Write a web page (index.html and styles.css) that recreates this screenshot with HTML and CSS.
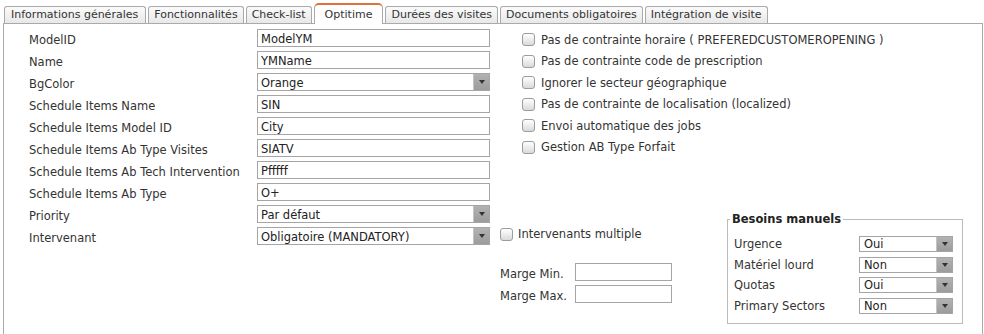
FILE: index.html
```html
<!DOCTYPE html>
<html lang="fr">
<head>
    <meta charset="UTF-8">
    <title>Optitime</title>
    <link rel="stylesheet" href="styles.css">
</head>
<body>
    <!-- Onglets -->
    <div class="tabs">
        <div class="tab">Informations générales</div>
        <div class="tab">Fonctionnalités</div>
        <div class="tab">Check-list</div>
        <div class="tab active">Optitime</div>
        <div class="tab">Durées des visites</div>
        <div class="tab">Documents obligatoires</div>
        <div class="tab">Intégration de visite</div>
    </div>

    <div class="panel">
        <!-- Champs principaux -->
        <div class="form">
            <label>ModelID</label><input class="field" type="text" value="ModelYM">
            <label>Name</label><input class="field" type="text" value="YMName">
            <label>BgColor</label>
            <div class="select"><span class="value">Orange</span><span class="arrow"></span></div>
            <label>Schedule Items Name</label><input class="field" type="text" value="SIN">
            <label>Schedule Items Model ID</label><input class="field" type="text" value="City">
            <label>Schedule Items Ab Type Visites</label><input class="field" type="text" value="SIATV">
            <label>Schedule Items Ab Tech Intervention</label><input class="field" type="text" value="Pfffff">
            <label>Schedule Items Ab Type</label><input class="field" type="text" value="O+">
            <label>Priority</label>
            <div class="select"><span class="value">Par défaut</span><span class="arrow"></span></div>
            <label>Intervenant</label>
            <div class="select"><span class="value">Obligatoire (MANDATORY)</span><span class="arrow"></span></div>
        </div>

        <div class="right">
            <!-- Options -->
            <div class="options">
                <div class="opt"><span class="check"></span>Pas de contrainte horaire ( PREFEREDCUSTOMEROPENING )</div>
                <div class="opt"><span class="check"></span>Pas de contrainte code de prescription</div>
                <div class="opt"><span class="check"></span>Ignorer le secteur géographique</div>
                <div class="opt"><span class="check"></span>Pas de contrainte de localisation (localized)</div>
                <div class="opt"><span class="check"></span>Envoi automatique des jobs</div>
                <div class="opt"><span class="check"></span>Gestion AB Type Forfait</div>
            </div>

            <div class="lower">
                <div class="lower-left">
                    <div class="opt multi"><span class="check"></span>Intervenants multiple</div>
                    <div class="marge">
                        <label>Marge Min.</label><input class="field" type="text">
                        <label>Marge Max.</label><input class="field" type="text">
                    </div>
                </div>

                <!-- Besoins manuels -->
                <fieldset class="besoins">
                    <legend>Besoins manuels</legend>
                    <div class="besoins-grid">
                        <label>Urgence</label>
                        <div class="select small"><span class="value">Oui</span><span class="arrow"></span></div>
                        <label>Matériel lourd</label>
                        <div class="select small"><span class="value">Non</span><span class="arrow"></span></div>
                        <label>Quotas</label>
                        <div class="select small"><span class="value">Oui</span><span class="arrow"></span></div>
                        <label>Primary Sectors</label>
                        <div class="select small"><span class="value">Non</span><span class="arrow"></span></div>
                    </div>
                </fieldset>
            </div>
        </div>
    </div>
</body>
</html>
```

FILE: styles.css
```css
body {
    margin: 0;
    padding: 3px 1px 0 3px;
    font-family: Verdana, "DejaVu Sans", sans-serif;
    font-size: 11.5px;
    color: #333;
    background: #fff;
}

/* Onglets */
.tabs {
    display: flex;
    align-items: flex-end;
    gap: 2px;
    height: 20px;
    padding-left: 1px;
    position: relative;
    z-index: 1;
    font-size: 11px;
}

.tab {
    line-height: 16px;
    padding: 0 5px;
    border: 1px solid #aaa;
    border-bottom: none;
    border-radius: 3px 3px 0 0;
    background: linear-gradient(#fbfbfb, #e8e8e8);
    white-space: nowrap;
}

.tab:first-child {
    padding: 0 7px 0 6px;
}

.tab.active {
    background: #fff;
    border-top: 2px solid #e0703c;
    border-radius: 5px 5px 0 0;
    padding: 2px 10px 1px;
    margin-bottom: -1px;
}

/* Panneau */
.panel {
    box-sizing: border-box;
    width: 980px;
    height: 330px;
    border: 1px solid #aaa;
    padding: 5px 0 0 25px;
    display: flex;
    align-items: flex-start;
}

.form {
    display: grid;
    grid-template-columns: 228px 233px;
    grid-auto-rows: 18px;
    row-gap: 4px;
}

label {
    line-height: 18px;
    padding-top: 2px;
    white-space: nowrap;
}

.field {
    box-sizing: border-box;
    height: 18px;
    margin: 0;
    border: 1px solid #a5a5a5;
    padding: 2px 3px 0;
    font: inherit;
    color: #222;
    outline: none;
}

.select {
    box-sizing: border-box;
    height: 18px;
    border: 1px solid #a5a5a5;
    display: flex;
    color: #222;
    background: #fff;
}

.select .value {
    flex: 1;
    padding: 1px 0 0 3px;
    line-height: 16px;
    white-space: nowrap;
}

.select .arrow {
    width: 15px;
    background: linear-gradient(#b2b2b2, #9c9c9c);
    border-left: 1px solid #c4c4c4;
    display: flex;
    align-items: center;
    justify-content: center;
}

.select .arrow::after {
    content: "";
    border-left: 3px solid transparent;
    border-right: 3px solid transparent;
    border-top: 4px solid #333;
}

/* Colonne de droite */
.right {
    padding-left: 10px;
    flex: 1;
    display: flex;
    flex-direction: column;
}

.options {
    padding-left: 22px;
}

.opt {
    display: flex;
    align-items: center;
    gap: 6px;
    height: 21.5px;
    white-space: nowrap;
}

.check {
    box-sizing: border-box;
    width: 13px;
    height: 13px;
    border: 1px solid #9c9c9c;
    border-radius: 3px;
    background: linear-gradient(#fff, #dadada);
}

.lower {
    display: flex;
    align-items: flex-start;
}

.opt.multi {
    margin-top: 67px;
    height: 18px;
    gap: 5px;
}

.marge {
    margin-top: 20px;
    display: grid;
    grid-template-columns: 75px 97px;
    grid-auto-rows: 18px;
    row-gap: 4px;
}

/* Besoins manuels */
.besoins {
    margin: 54px 19px 0 auto;
    border: 1px solid #bbb;
    padding: 10px 9px 9px 6px;
}

.besoins legend {
    font-weight: bold;
    color: #222;
    line-height: 14px;
    padding: 0 2px;
    margin-left: -4px;
}

.besoins-grid {
    display: grid;
    grid-template-columns: 125px 94px;
    grid-auto-rows: 16px;
    row-gap: 4.7px;
}

.besoins-grid label {
    line-height: 16px;
    padding-top: 0;
}

.select.small {
    height: 16px;
}

.select.small .value {
    line-height: 14px;
    padding: 0 0 0 4px;
}
```
